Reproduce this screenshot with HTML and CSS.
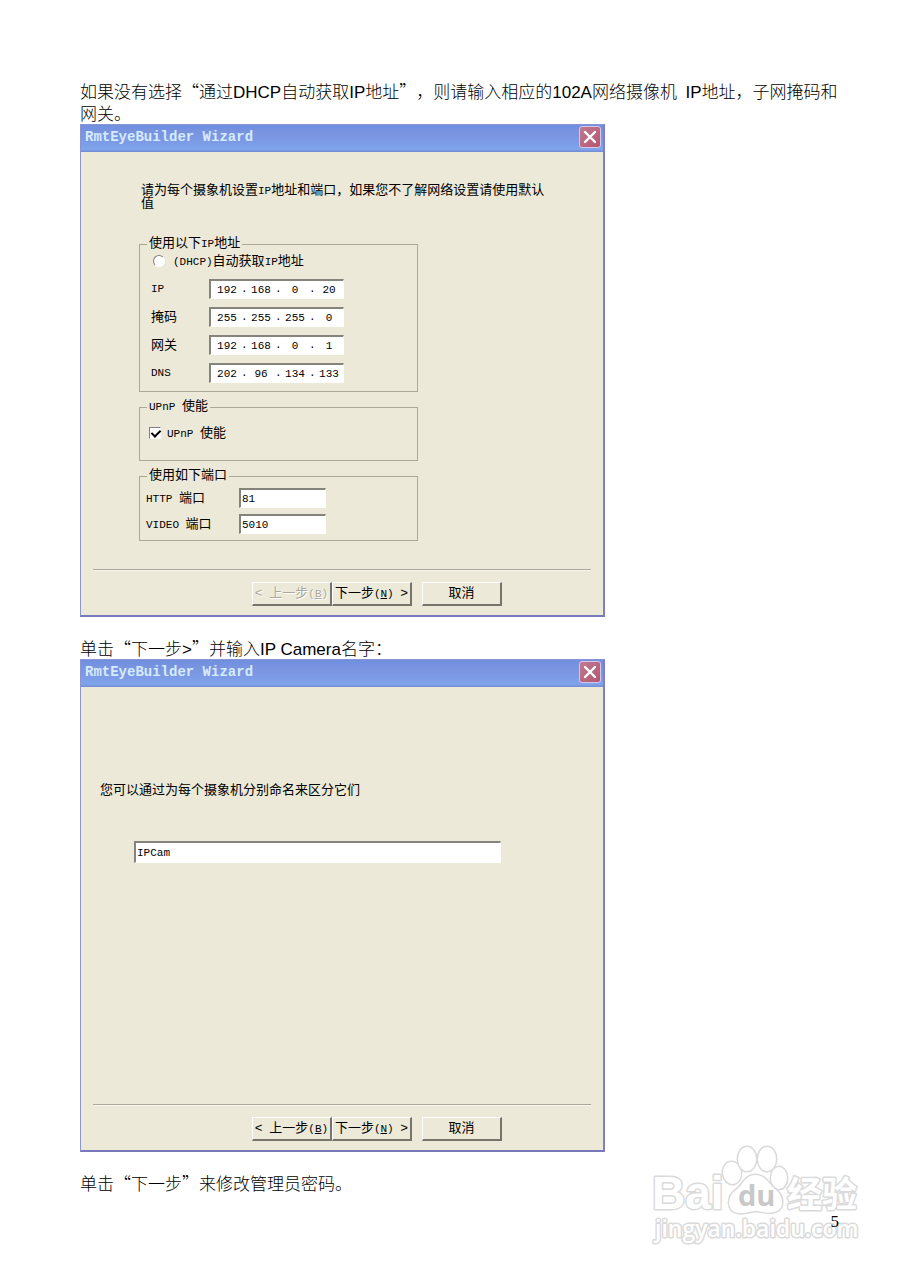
FILE: index.html
```
<!DOCTYPE html>
<html lang="zh-CN">
<head>
	<meta charset="UTF-8">
	<title>RmtEyeBuilder Wizard</title>
	<link rel="stylesheet" href="styles.css">
</head>
<body>

<main class="page">
	<p class="text">如果没有选择“通过<span class="latin">DHCP</span>自动获取<span class="latin">IP</span>地址”，则请输入相应的<span class="latin">102A</span>网络摄像机 <span class="latin">&nbsp;IP</span>地址，子网掩码和网关。</p>

	<section class="wizard">
		<header class="wizard__header">
			<h2 class="wizard__title">RmtEyeBuilder Wizard</h2>
			<button class="wizard__close" type="button" aria-label="关闭">
				<svg width="14" height="14" viewBox="0 0 14 14"><path d="M2 2L12 12M12 2L2 12" stroke="#fff" stroke-width="2.4" stroke-linecap="round"/></svg>
			</button>
		</header>
		<form class="wizard__body">
			<p class="wizard__hint">请为每个摄象机设置<span class="en">IP</span>地址和端口，如果您不了解网络设置请使用默认值</p>

			<fieldset class="group group_ip">
				<legend>使用以下<span class="en">IP</span>地址</legend>
				<label class="check check_radio"><input class="radio" type="radio" name="dhcp"><span><span class="en">(DHCP)</span>自动获取<span class="en">IP</span>地址</span></label>
				<div class="row">
					<label class="row__label en" for="ip1">IP</label>
					<div class="ip">
						<input id="ip1" value="192"><i>.</i><input aria-label="IP 2" value="168"><i>.</i><input aria-label="IP 3" value="0"><i>.</i><input aria-label="IP 4" value="20">
					</div>
				</div>
				<div class="row">
					<label class="row__label" for="mask1">掩码</label>
					<div class="ip">
						<input id="mask1" value="255"><i>.</i><input aria-label="掩码 2" value="255"><i>.</i><input aria-label="掩码 3" value="255"><i>.</i><input aria-label="掩码 4" value="0">
					</div>
				</div>
				<div class="row">
					<label class="row__label" for="gate1">网关</label>
					<div class="ip">
						<input id="gate1" value="192"><i>.</i><input aria-label="网关 2" value="168"><i>.</i><input aria-label="网关 3" value="0"><i>.</i><input aria-label="网关 4" value="1">
					</div>
				</div>
				<div class="row">
					<label class="row__label en" for="dns1">DNS</label>
					<div class="ip">
						<input id="dns1" value="202"><i>.</i><input aria-label="DNS 2" value="96"><i>.</i><input aria-label="DNS 3" value="134"><i>.</i><input aria-label="DNS 4" value="133">
					</div>
				</div>
			</fieldset>

			<fieldset class="group group_upnp">
				<legend><span class="en">UPnP </span>使能</legend>
				<label class="check"><input class="checkbox" type="checkbox" checked><span><span class="en">UPnP </span>使能</span></label>
			</fieldset>

			<fieldset class="group group_ports">
				<legend>使用如下端口</legend>
				<div class="row row_port">
					<label class="row__label" for="http"><span class="en">HTTP </span>端口</label>
					<input class="field" id="http" value="81">
				</div>
				<div class="row row_port">
					<label class="row__label" for="video"><span class="en">VIDEO </span>端口</label>
					<input class="field" id="video" value="5010">
				</div>
			</fieldset>
		</form>
		<footer class="wizard__footer">
			<button class="btn" type="button" disabled>&lt;<span class="en"> </span>上一步<span class="en">(<u>B</u>)</span></button>
			<button class="btn" type="button">下一步<span class="en">(<u>N</u>) </span>&gt;</button>
			<button class="btn btn_cancel" type="button">取消</button>
		</footer>
	</section>

	<p class="text text_next">单击“下一步<span class="latin">&gt;</span>”并输入<span class="latin">IP Camera</span>名字：</p>

	<section class="wizard">
		<header class="wizard__header">
			<h2 class="wizard__title">RmtEyeBuilder Wizard</h2>
			<button class="wizard__close" type="button" aria-label="关闭">
				<svg width="14" height="14" viewBox="0 0 14 14"><path d="M2 2L12 12M12 2L2 12" stroke="#fff" stroke-width="2.4" stroke-linecap="round"/></svg>
			</button>
		</header>
		<form class="wizard__body wizard__body_name">
			<label class="wizard__label" for="name">您可以通过为每个摄象机分别命名来区分它们</label>
			<input class="field field_name" id="name" value="IPCam">
		</form>
		<footer class="wizard__footer">
			<button class="btn" type="button">&lt;<span class="en"> </span>上一步<span class="en">(<u>B</u>)</span></button>
			<button class="btn" type="button">下一步<span class="en">(<u>N</u>) </span>&gt;</button>
			<button class="btn btn_cancel" type="button">取消</button>
		</footer>
	</section>

	<p class="text text_next">单击“下一步”来修改管理员密码。</p>

	<!-- watermark -->
	<svg class="watermark" width="226" height="108" viewBox="0 0 226 108">
		<g class="watermark__shape">
			<text class="watermark__logo" x="2" y="67">Bai</text>
			<ellipse cx="82" cy="31" rx="9" ry="11" transform="rotate(-8 82 31)"/>
			<ellipse cx="97" cy="17" rx="9" ry="12"/>
			<ellipse cx="117" cy="17" rx="9" ry="12"/>
			<ellipse cx="129" cy="36" rx="8" ry="11"/>
			<path d="M105 33C95 33 94 42 86 48C77 54 76 69 88 71C96 72 100 69 106 69C112 69 117 72 124 70C135 68 134 54 126 48C118 42 116 33 105 33Z"/>
			<text class="watermark__cjk" x="137" y="65">经验</text>
			<text class="watermark__url" x="5" y="95">jingyan.baidu.com</text>
		</g>
		<text class="watermark__du" x="88" y="64">du</text>
	</svg>
	<div class="page__number">5</div>
</main>

</body>
</html>
```
FILE: styles.css
```
* {
	box-sizing: border-box;
}

body {
	margin: 0;
	background: #fff;
	color: #000;
}

.page {
	position: relative;
	min-height: 100vh;
	padding: 80px 70px 50px 80px;
	font-family: "Noto Sans CJK SC", sans-serif;
	text-spacing-trim: space-all;
}

.text {
	margin: 0;
	font-size: 17px;
	font-weight: 300;
	line-height: 22px;
}

.text_next {
	margin-top: 20px;
}

.latin {
	font-family: "Liberation Sans", "Noto Sans CJK SC", sans-serif;
	font-weight: 400;
	line-height: 16px;
}

.page__number {
	position: relative;
	margin-top: 18px;
	padding-right: 9px;
	font-family: "Liberation Serif", serif;
	font-size: 17px;
	line-height: 20px;
	text-align: right;
}

/* wizard window */

.wizard {
	display: flex;
	flex-direction: column;
	max-width: 525px;
	min-height: 493px;
	border: 1px solid #8a96d4;
	border-right: 2px solid #7d7fcb;
	border-bottom: 2px solid #7878bd;
	background: #ece9d8;
	font-family: "Liberation Mono", "Noto Sans CJK SC", monospace;
	font-size: 13px;
	line-height: 13px;
}

.wizard__header {
	display: flex;
	align-items: center;
	justify-content: space-between;
	height: 27px;
	padding: 0 2px 3px 4px;
	background: linear-gradient(#6f8fe0, #7b94df 30%, #7c9be6 65%, #80a5eb 90%, #7489d4);
}

.wizard__title {
	margin: 0;
	font-size: 14px;
	line-height: 20px;
	color: #d5ebff;
}

.wizard__close {
	display: flex;
	align-items: center;
	justify-content: center;
	width: 22px;
	height: 22px;
	padding: 0;
	border: 1px solid #d9c5ea;
	border-radius: 3px;
	background: linear-gradient(135deg, #c07a92, #b5566c);
}

.wizard__body {
	flex: 1;
	padding: 32px 56px 27px 58px;
}

.wizard__hint {
	margin: 0 0 27px;
	padding-left: 2px;
}

.en {
	font-size: 11px;
	line-height: 9px;
}

.group {
	max-width: 279px;
	min-width: 0;
	margin: 0 0 8px;
	padding: 0 9px;
	border: 1px solid #aca899;
}

.group legend {
	padding: 0 2px;
	margin-left: -2px;
	line-height: 14px;
}

.group_ip {
	height: 155px;
}

.group_upnp {
	height: 61px;
}

.group_ports {
	height: 72px;
	margin-bottom: 0;
	padding: 2px 6px 0;
}

.group_ports legend {
	margin-left: 1px;
}

.check {
	display: flex;
	align-items: center;
	gap: 6px;
	height: 20px;
}

.check_radio {
	margin-bottom: 4px;
	padding-left: 4px;
	gap: 8px;
}

.group_upnp .check {
	margin-top: 9px;
}

.radio,
.checkbox {
	appearance: none;
	flex: none;
	width: 12px;
	height: 12px;
	margin: 0;
	border: 1px solid #808080;
	border-right-color: #fff;
	border-bottom-color: #fff;
	background: #fff;
}

.radio {
	border-radius: 50%;
}

.checkbox:checked::after {
	content: "";
	display: block;
	width: 4px;
	height: 7px;
	margin: 0 3px;
	border: solid #000;
	border-width: 0 2px 2px 0;
	transform: rotate(45deg);
}

.row {
	display: flex;
	align-items: center;
	height: 28px;
}

.row__label {
	width: 60px;
	padding-left: 2px;
}

.row_port {
	height: 26px;
}

.row_port .row__label {
	width: 93px;
	padding-left: 0;
}

.ip,
.field {
	height: 20px;
	border: 1px solid #fff;
	border-top: 2px solid #84847c;
	border-left: 2px solid #84847c;
	background: #fff;
}

.ip {
	display: flex;
	align-items: center;
	width: 135px;
	padding-left: 2px;
	font-size: 11px;
}

.ip input {
	flex: 1;
	min-width: 0;
	height: 15px;
	padding: 0;
	border: 0;
	background: none;
	font: inherit;
	text-align: center;
}

.ip i {
	width: 6px;
	font-style: normal;
}

.field {
	width: 87px;
	padding: 0 1px;
	border-radius: 0;
	font: 11px "Liberation Mono", monospace;
}

.wizard__body_name {
	padding: 97px 102px 20px 19px;
}

.wizard__label {
	display: block;
	margin-bottom: 44px;
}

.field_name {
	display: block;
	width: calc(100% - 34px);
	height: 22px;
	margin-left: 34px;
}

.wizard__footer {
	display: flex;
	justify-content: flex-end;
	margin: 0 12px;
	padding: 12px 89px 9px 0;
	border-top: 1px solid #aca899;
	box-shadow: inset 0 1px #f8f7ee;
}

.btn {
	width: 80px;
	height: 24px;
	padding: 0;
	border: 1px solid #fff;
	border-right: 2px solid #77756a;
	border-bottom: 2px solid #77756a;
	background: #ece9d8;
	color: #000;
	font: inherit;
	white-space: nowrap;
}

.btn:disabled {
	color: #aca899;
	text-shadow: 1px 1px #fff;
}

.btn_cancel {
	margin-left: 10px;
}

/* watermark */

.watermark {
	position: absolute;
	right: 42px;
	bottom: 32px;
}

.watermark__shape {
	fill: #fff;
	stroke: #dadada;
	stroke-width: 3px;
	stroke-linejoin: round;
	paint-order: stroke;
}

.watermark__logo {
	font: bold 46px "Liberation Sans", sans-serif;
}

.watermark__cjk {
	font: bold 35px "Noto Sans CJK SC", sans-serif;
}

.watermark__url {
	font: 600 23px "Open Sans", sans-serif;
}

.watermark__du {
	fill: #c8c8c8;
	font: bold 29px "Open Sans", sans-serif;
}
```
